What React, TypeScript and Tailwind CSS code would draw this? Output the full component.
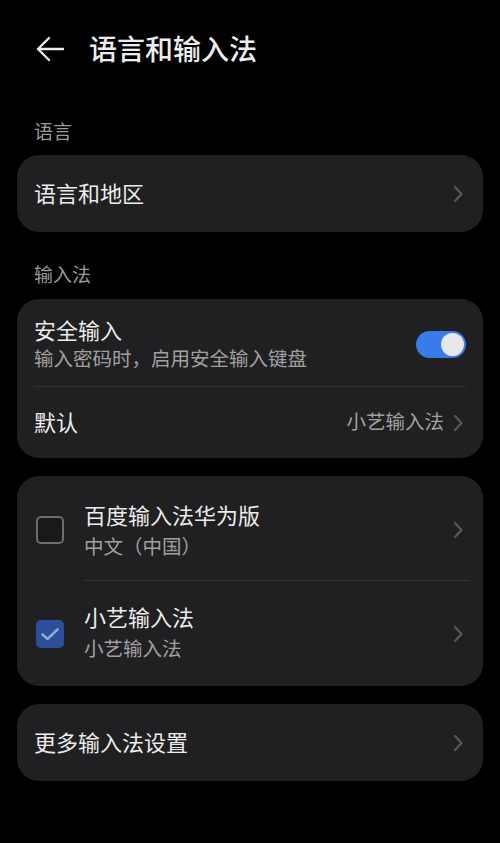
import React from "react";

const font = { fontFamily: '"Noto Sans CJK SC", "Noto Sans", sans-serif' };

function Chevron() {
  return (
    <svg width="10" height="18" viewBox="0 0 10 18" className="shrink-0">
      <path d="M2 2 L8.5 9 L2 16" fill="none" stroke="#5a5a5c" strokeWidth="2" strokeLinecap="round" strokeLinejoin="round" />
    </svg>
  );
}

function Checkbox({ checked }: { checked: boolean }) {
  if (checked) {
    return (
      <div className="w-[28px] h-[28px] rounded-[5px] bg-[#2c4f99] shrink-0">
        <svg width="28" height="28" viewBox="0 0 28 28">
          <path d="M6.5 14.5 L11.5 19 L21.5 9.5" fill="none" stroke="#93a6cc" strokeWidth="2.6" strokeLinecap="round" strokeLinejoin="round" />
        </svg>
      </div>
    );
  }
  return <div className="w-[28px] h-[28px] rounded-[5px] border-2 border-[#6e6e70] bg-[#19191b] shrink-0" />;
}

function Toggle() {
  return (
    <div className="w-[50px] h-[27px] rounded-full bg-[#3a7bea] flex items-center justify-end pr-[2px] shrink-0">
      <div className="w-[23px] h-[23px] rounded-full bg-[#e9e7ea]" />
    </div>
  );
}

export default function App() {
  return (
    <div className="w-[500px] h-[843px] bg-black text-[#ececec] overflow-hidden" style={font}>
      <div className="h-[98px] flex items-center pl-[35px]">
        <svg width="30" height="28" viewBox="0 0 30 28">
          <path d="M28 14 H3 M14 3 L3 14 L14 25" fill="none" stroke="#ececec" strokeWidth="2.4" strokeLinecap="round" strokeLinejoin="round" />
        </svg>
        <span className="ml-[24px] text-[28px] leading-[36px] font-medium pb-[2px]">语言和输入法</span>
      </div>

      <div className="h-[57px] flex items-end pb-[12px] pl-[34px] text-[19px] leading-[24px] text-[#9a9a9a]">语言</div>

      <div className="mx-[17px] h-[77px] rounded-[22px] bg-[#202022] flex items-center justify-between pl-[17px] pr-[20px]">
        <span className="text-[22px] leading-[28px] pb-[4px]">语言和地区</span>
        <Chevron />
      </div>

      <div className="h-[67px] flex items-end pb-[13px] pl-[34px] text-[19px] leading-[24px] text-[#9a9a9a]">输入法</div>

      <div className="mx-[17px] rounded-[22px] bg-[#202022] px-[17px]">
        <div className="h-[87px] flex items-center justify-between pt-[3px]">
          <div className="flex flex-col">
            <span className="text-[22px] leading-[28px]">安全输入</span>
            <span className="text-[19.5px] leading-[30px] text-[#a0a0a0]">输入密码时，启用安全输入键盘</span>
          </div>
          <Toggle />
        </div>
        <div className="h-px bg-[#333335]" />
        <div className="h-[71px] flex items-center justify-between pr-[3px]">
          <span className="text-[22px] leading-[28px] pb-[4px]">默认</span>
          <div className="flex items-center gap-[9px]">
            <span className="text-[19.5px] leading-[26px] text-[#a0a0a0] pb-[3px]">小艺输入法</span>
            <Chevron />
          </div>
        </div>
      </div>

      <div className="mx-[17px] mt-[18px] rounded-[22px] bg-[#202022] pl-[19px] pr-[20px]">
        <div className="h-[104px] flex items-center pt-[3px]">
          <Checkbox checked={false} />
          <div className="ml-[20px] flex-1 flex items-center justify-between">
            <div className="flex flex-col pt-[1px]">
              <span className="text-[22px] leading-[31px]">百度输入法华为版</span>
              <span className="text-[19.5px] leading-[31px] text-[#a0a0a0]">中文（中国）</span>
            </div>
            <Chevron />
          </div>
        </div>
        <div className="ml-[48px] mr-[-7px] h-px bg-[#333335]" />
        <div className="h-[105px] flex items-center">
          <Checkbox checked={true} />
          <div className="ml-[20px] flex-1 flex items-center justify-between">
            <div className="flex flex-col pb-[3px]">
              <span className="text-[22px] leading-[31px]">小艺输入法</span>
              <span className="text-[19.5px] leading-[31px] text-[#a0a0a0]">小艺输入法</span>
            </div>
            <Chevron />
          </div>
        </div>
      </div>

      <div className="mx-[17px] mt-[18px] h-[77px] rounded-[22px] bg-[#202022] flex items-center justify-between pl-[17px] pr-[20px]">
        <span className="text-[22px] leading-[28px] pb-[4px]">更多输入法设置</span>
        <Chevron />
      </div>
    </div>
  );
}
